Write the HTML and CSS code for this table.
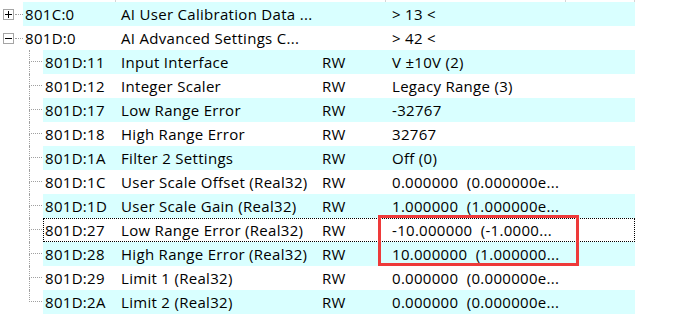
FILE: index.html
```html
<!DOCTYPE html>
<html>
<head>
<meta charset="utf-8">
<link rel="stylesheet" href="styles.css">
</head>
<body>
<div class="grid">
  <div class="header">
    <div class="hcol h1"></div><div class="hcol h2"></div><div class="hcol h3"></div><div class="hcol h4"></div>
  </div>

  <div class="row lvl1 alt">
    <div class="indent1"><span class="box plus"></span><span class="hdash"></span></div>
    <div class="cells"><div class="c-id">801C:0</div><div class="c-name">AI User Calibration Data ...</div><div class="c-rw"></div><div class="c-val">&gt; 13 &lt;</div></div>
  </div>
  <div class="row lvl1">
    <div class="indent1"><span class="box minus"></span><span class="hdash"></span></div>
    <div class="cells"><div class="c-id">801D:0</div><div class="c-name">AI Advanced Settings C...</div><div class="c-rw"></div><div class="c-val">&gt; 42 &lt;</div></div>
  </div>

  <div class="row lvl2 alt">
    <div class="indent2"><div class="tl-top"></div><div class="tl-bot"></div></div>
    <div class="cells"><div class="c-id">801D:11</div><div class="c-name">Input Interface</div><div class="c-rw">RW</div><div class="c-val">V ±10V (2)</div></div>
  </div>
  <div class="row lvl2">
    <div class="indent2"><div class="tl-top"></div><div class="tl-bot"></div></div>
    <div class="cells"><div class="c-id">801D:12</div><div class="c-name">Integer Scaler</div><div class="c-rw">RW</div><div class="c-val">Legacy Range (3)</div></div>
  </div>
  <div class="row lvl2 alt">
    <div class="indent2"><div class="tl-top"></div><div class="tl-bot"></div></div>
    <div class="cells"><div class="c-id">801D:17</div><div class="c-name">Low Range Error</div><div class="c-rw">RW</div><div class="c-val">-32767</div></div>
  </div>
  <div class="row lvl2">
    <div class="indent2"><div class="tl-top"></div><div class="tl-bot"></div></div>
    <div class="cells"><div class="c-id">801D:18</div><div class="c-name">High Range Error</div><div class="c-rw">RW</div><div class="c-val">32767</div></div>
  </div>
  <div class="row lvl2 alt">
    <div class="indent2"><div class="tl-top"></div><div class="tl-bot"></div></div>
    <div class="cells"><div class="c-id">801D:1A</div><div class="c-name">Filter 2 Settings</div><div class="c-rw">RW</div><div class="c-val">Off (0)</div></div>
  </div>
  <div class="row lvl2">
    <div class="indent2"><div class="tl-top"></div><div class="tl-bot"></div></div>
    <div class="cells"><div class="c-id">801D:1C</div><div class="c-name">User Scale Offset (Real32)</div><div class="c-rw">RW</div><div class="c-val">0.000000  (0.000000e...</div></div>
  </div>
  <div class="row lvl2 alt">
    <div class="indent2"><div class="tl-top"></div><div class="tl-bot"></div></div>
    <div class="cells"><div class="c-id">801D:1D</div><div class="c-name">User Scale Gain (Real32)</div><div class="c-rw">RW</div><div class="c-val">1.000000  (1.000000e...</div></div>
  </div>
  <div class="row lvl2">
    <div class="indent2"><div class="tl-top"></div><div class="tl-bot"></div></div>
    <div class="cells focus"><div class="c-id">801D:27</div><div class="c-name">Low Range Error (Real32)</div><div class="c-rw">RW</div><div class="c-val">-10.000000  (-1.0000...</div></div>
  </div>
  <div class="row lvl2 alt">
    <div class="indent2"><div class="tl-top"></div><div class="tl-bot"></div></div>
    <div class="cells"><div class="c-id">801D:28</div><div class="c-name">High Range Error (Real32)</div><div class="c-rw">RW</div><div class="c-val">10.000000  (1.000000...</div></div>
  </div>
  <div class="row lvl2">
    <div class="indent2"><div class="tl-top"></div><div class="tl-bot"></div></div>
    <div class="cells"><div class="c-id">801D:29</div><div class="c-name">Limit 1 (Real32)</div><div class="c-rw">RW</div><div class="c-val">0.000000  (0.000000e...</div></div>
  </div>
  <div class="row lvl2 alt">
    <div class="indent2"><div class="tl-top"></div></div>
    <div class="cells"><div class="c-id">801D:2A</div><div class="c-name">Limit 2 (Real32)</div><div class="c-rw">RW</div><div class="c-val">0.000000  (0.000000e...</div></div>
  </div>

  <div class="highlight"></div>
</div>
</body>
</html>
```

FILE: styles.css
```css
html, body {
  margin: 0;
  padding: 0;
  background: #ffffff;
}
body {
  width: 682px;
  height: 316px;
  overflow: hidden;
  font-family: "Open Sans", "Noto Sans CJK SC", sans-serif;
  font-size: 15px;
  letter-spacing: 0.3px;
  color: #000000;
}
.grid {
  position: relative;
  width: 682px;
}
.header {
  height: 2px;
  display: flex;
}
.hcol {
  height: 2px;
  border-right: 1px solid #d5d5d5;
  box-sizing: border-box;
}
.h1 { width: 116px; }
.h2 { width: 270px; }
.h3 { width: 180px; }
.h4 { width: 69px; }

.row {
  display: flex;
  height: 24px;
}
.cells {
  flex: 1 0 auto;
  display: flex;
  align-items: center;
  height: 24px;
  box-sizing: border-box;
  white-space: pre;
}
.row.lvl1 .cells { max-width: 612px; }
.row.lvl2 .cells { max-width: 592px; }
.row.alt .cells { background: #d9ffff; }
.cells.focus { outline: 1px dotted #000000; outline-offset: -1px; }

.c-id { padding-left: 2px; box-sizing: border-box; }
.lvl1 .c-id { width: 96px; }
.lvl2 .c-id { width: 76px; }
.c-name { width: 201px; padding-left: 2px; box-sizing: border-box; }
.c-rw { width: 70px; padding-left: 2px; box-sizing: border-box; }
.c-val { padding-left: 2px; }

.indent1 {
  width: 23px;
  flex: 0 0 23px;
  display: flex;
  align-items: center;
}
.box {
  width: 11px;
  height: 11px;
  margin-left: 3px;
  box-sizing: border-box;
  border: 1px solid #a5a5a5;
  background: #ffffff;
  position: relative;
  flex: 0 0 11px;
}
.box::before {
  content: "";
  position: absolute;
  left: 1px;
  top: 4px;
  width: 7px;
  height: 1px;
  background: #000000;
}
.plus::after {
  content: "";
  position: absolute;
  left: 4px;
  top: 1px;
  width: 1px;
  height: 7px;
  background: #000000;
}
.hdash {
  width: 8px;
  margin-left: 1px;
  border-top: 1px dotted #a0a0a0;
  height: 0;
}

.indent2 {
  width: 43px;
  flex: 0 0 43px;
  display: flex;
  flex-direction: column;
}
.tl-top {
  margin-left: 29px;
  width: 13px;
  height: 12px;
  box-sizing: border-box;
  border-left: 1px dotted #a0a0a0;
  border-bottom: 1px dotted #a0a0a0;
}
.tl-bot {
  margin-left: 29px;
  height: 12px;
  border-left: 1px dotted #a0a0a0;
}

.highlight {
  position: absolute;
  left: 378px;
  top: 215px;
  width: 201px;
  height: 51px;
  box-sizing: border-box;
  border: 3px solid #ee3a3a;
}
```
